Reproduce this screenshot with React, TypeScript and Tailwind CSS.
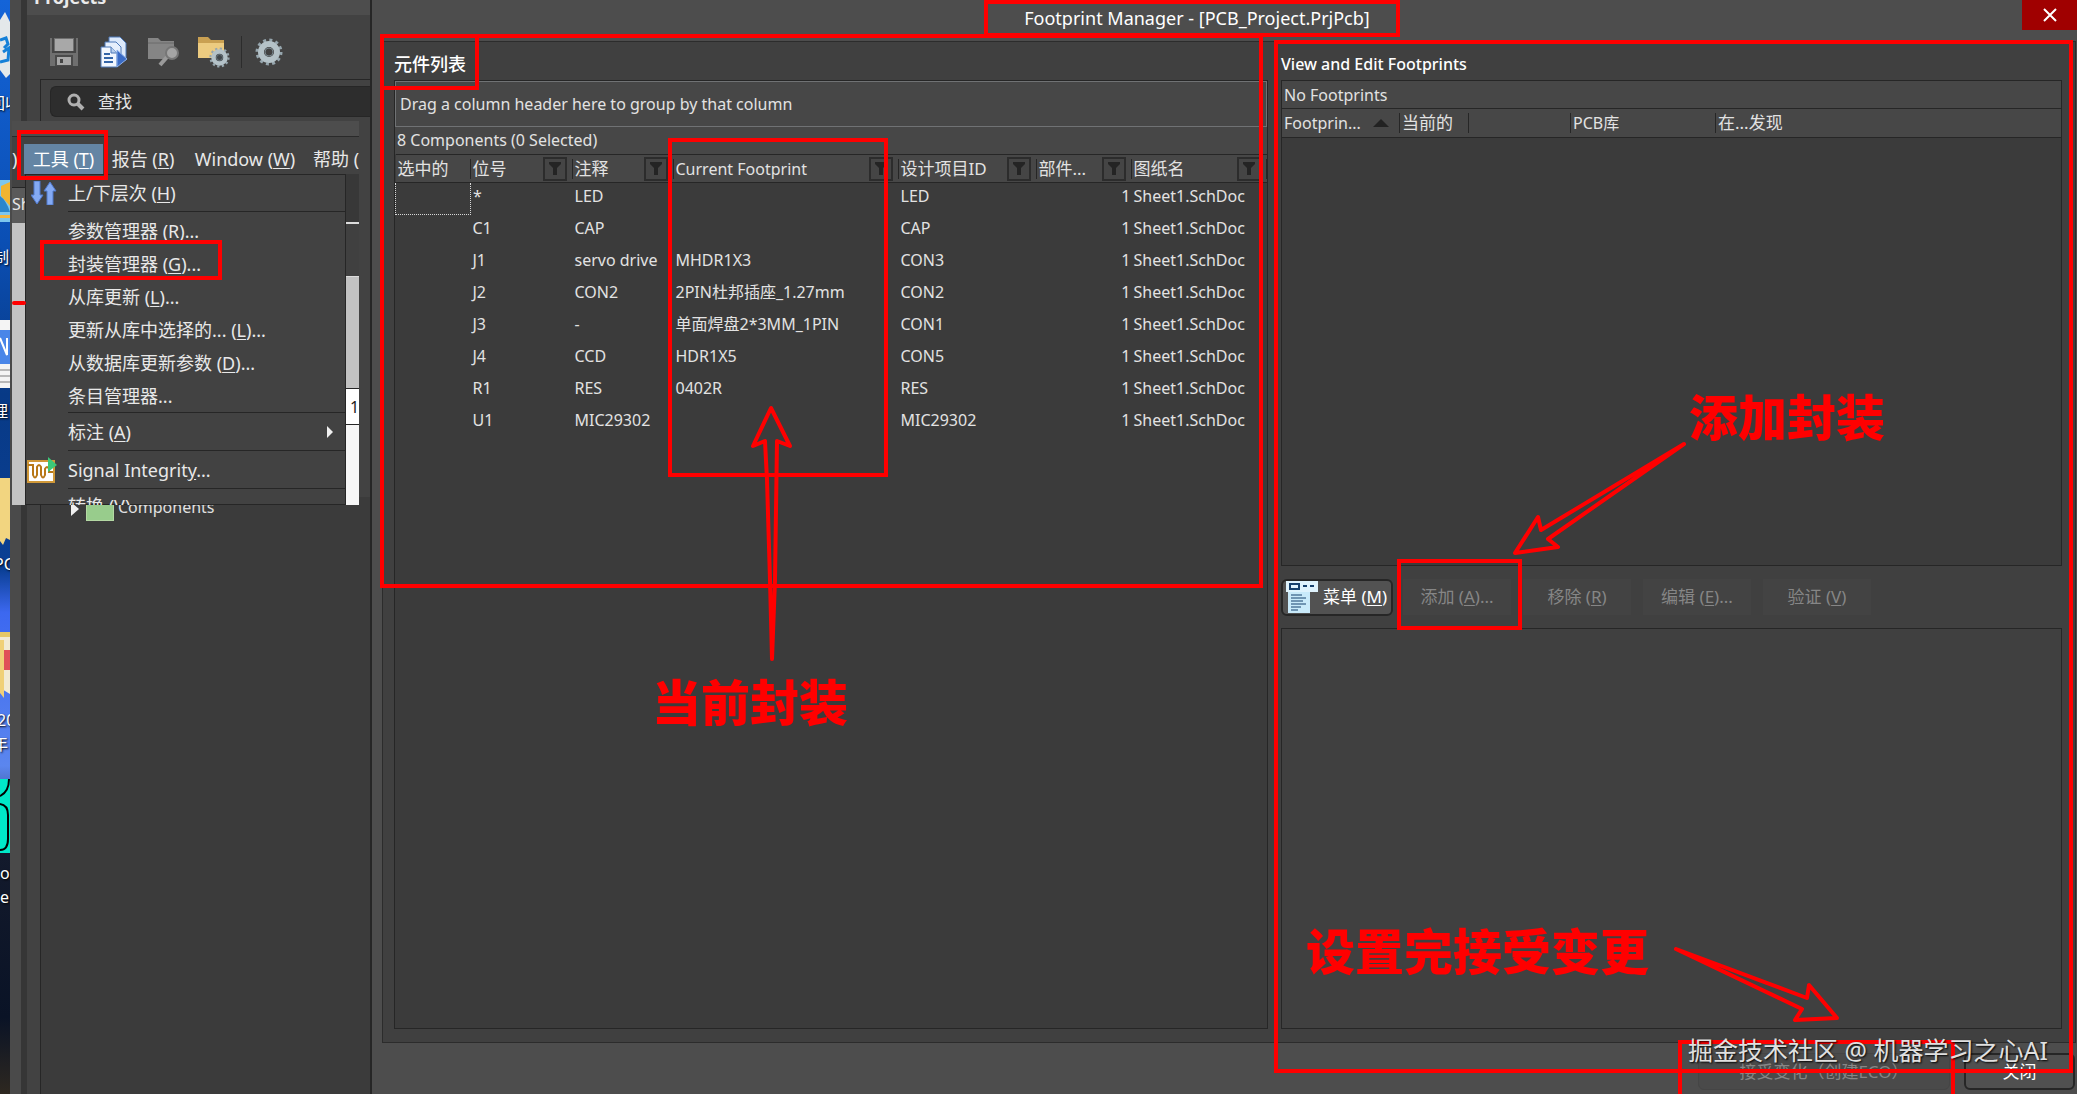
import type { ReactNode } from "react";

const components = [
  { designator: "*", comment: "LED", footprint: "", item: "LED" },
  { designator: "C1", comment: "CAP", footprint: "", item: "CAP" },
  { designator: "J1", comment: "servo drive", footprint: "MHDR1X3", item: "CON3" },
  { designator: "J2", comment: "CON2", footprint: "2PIN杜邦插座_1.27mm", item: "CON2" },
  { designator: "J3", comment: "-", footprint: "单面焊盘2*3MM_1PIN", item: "CON1" },
  { designator: "J4", comment: "CCD", footprint: "HDR1X5", item: "CON5" },
  { designator: "R1", comment: "RES", footprint: "0402R", item: "RES" },
  { designator: "U1", comment: "MIC29302", footprint: "", item: "MIC29302" },
];

const listColumns = [
  { title: "选中的", width: "w-[75px]", filter: false },
  { title: "位号", width: "w-[102px]", filter: true },
  { title: "注释", width: "w-[101px]", filter: true },
  { title: "Current Footprint", width: "w-[225px]", filter: true },
  { title: "设计项目ID", width: "w-[138px]", filter: true },
  { title: "部件...", width: "w-[95px]", filter: true },
  { title: "图纸名", width: "", filter: true },
];

const desktopLabels = [
  { text: "回收", className: "-left-[11px] top-[92px]" },
  { text: "制", className: "-left-[7px] top-[246px]" },
  { text: "理", className: "-left-[8px] top-[400px]" },
  { text: "PC", className: "-left-[6px] top-[553px]" },
  { text: "20", className: "-left-[3px] top-[709px]" },
  { text: "年", className: "-left-[8px] top-[733px]" },
  { text: "o", className: "left-0 top-[862px]" },
  { text: "e", className: "left-0 top-[886px]" },
];

// Letter shown in brackets after a caption, underlined as the access key
const Key = ({ children }: { children: ReactNode }) => (
  <span className="underline underline-offset-2">{children}</span>
);

const Desktop = () => (
  <aside className="relative w-[10px] shrink-0 overflow-hidden bg-[#0c1220]">
    <svg width="10" height="1094" className="absolute left-0 top-0">
      <defs>
        <linearGradient id="wall" x1="0" y1="0" x2="0" y2="1">
          <stop offset="0" stopColor="#1464d8" />
          <stop offset="0.22" stopColor="#0b4fb4" />
          <stop offset="0.36" stopColor="#083a86" />
          <stop offset="0.52" stopColor="#0a3f94" />
          <stop offset="0.56" stopColor="#3c68f0" />
          <stop offset="0.7" stopColor="#5b86ee" />
          <stop offset="0.78" stopColor="#131a2c" />
          <stop offset="0.93" stopColor="#0a1326" />
          <stop offset="1" stopColor="#2e2820" />
        </linearGradient>
      </defs>
      <rect width="10" height="1094" fill="url(#wall)" />
      <path d="M0 20 L5 12 L10 22 V74 L6 78 L0 70 Z" fill="#e4e8ea" />
      <path d="M0 40 L6 38 L8 44 L4 48 M3 52 L9 48 L8 60 L0 62" stroke="#1580d8" strokeWidth="3" fill="none" />
      <rect y="180" width="10" height="42" fill="#7cc6ee" />
      <path d="M1 186 L10 182 V206 L1 196 Z" fill="#f0b430" />
      <path d="M0 196 Q6 200 10 212 H0 Z" fill="#2a86cc" />
      <rect y="215" width="10" height="3" fill="#f2b640" />
      <rect y="320" width="10" height="68" fill="#f4f4f4" />
      <rect y="330" width="10" height="34" fill="#4a86e8" />
      <path d="M0 338 L7 355 V338" stroke="#fff" strokeWidth="2" fill="none" />
      <path d="M0 370 H10 M0 376 H10 M0 382 H10" stroke="#b8b8b8" strokeWidth="2" />
      <path d="M0 478 H10 V540 L6 538 L3 545 L0 541 Z" fill="#f2d580" />
      <path d="M0 632 H10 V694 L0 688 Z" fill="#f2ead4" />
      <rect y="632" width="10" height="5" fill="#e6c766" />
      <rect x="4" y="650" width="6" height="20" fill="#e05058" />
      <path d="M0 640 H4 V698 L0 693 Z" fill="#f0d078" />
      <rect y="779" width="10" height="74" fill="#00e8c8" />
      <path d="M0 796 Q9 792 9 779 M0 804 Q8 805 8 815 V839 Q8 850 0 850" stroke="#000" strokeWidth="2" fill="none" />
    </svg>
    {desktopLabels.map((label) => (
      <span
        key={label.text}
        className={`absolute whitespace-nowrap text-base leading-[22px] text-white [text-shadow:1px_1px_2px_#000] ${label.className}`}
      >
        {label.text}
      </span>
    ))}
  </aside>
);

const SaveIcon = () => (
  <svg width="28" height="28" viewBox="0 0 28 28">
    <path d="M0 0 H28 V28 H0 Z" fill="#6f6f6f" />
    <rect x="5" y="1" width="18" height="12" fill="#a8a8a8" />
    <path d="M3 0 V14 H25 V0" stroke="#454545" strokeWidth="2" fill="none" />
    <rect x="5" y="17" width="18" height="11" fill="#4a4a4a" />
    <rect x="7" y="19" width="14" height="8" fill="#a8a8a8" />
    <rect x="10" y="21" width="3" height="4" fill="#454545" />
  </svg>
);

const DocsIcon = () => (
  <svg width="28" height="32" viewBox="0 0 28 32">
    <path d="M9 1 H20 L26 7 V24 H9 Z" fill="#dce9fb" stroke="#4c78b8" />
    <path d="M5 6 H16 L21 11 V27 H5 Z" fill="#e6effc" stroke="#4c78b8" />
    <path d="M1 11 H11 L17 17 V31 H1 Z" fill="#f2f7fe" stroke="#4c78b8" />
    <path d="M11 11 V17 H17" fill="#b9d0ee" stroke="#4c78b8" />
    <path d="M4 18 H10 M4 22 H13 M4 26 H13" stroke="#3465a8" strokeWidth="2" />
    <path d="M17 14 L27 23 L17 31 Z" fill="#3b6cc6" stroke="#8fb2ea" />
  </svg>
);

const FolderSearchIcon = () => (
  <svg width="32" height="30" viewBox="0 0 32 30">
    <path d="M0 1 H10 L13 4 H26 V22 H0 Z" fill="#858585" />
    <path d="M0 6 H26" stroke="#6a6a6a" />
    <path d="M19 20 L12 28" stroke="#9a9a9a" strokeWidth="4" />
    <circle cx="24" cy="16" r="6" fill="#a4a4a4" stroke="#767676" strokeWidth="2" />
  </svg>
);

const Gear = ({ size, fill = "none" }: { size: number; fill?: string }) => (
  <svg width={size} height={size} viewBox="0 0 28 28">
    <circle cx="14" cy="14" r="12" fill="none" stroke="#96a6ae" strokeWidth="3" strokeDasharray="3 3.28" />
    <circle cx="14" cy="14" r="8" fill={fill} stroke="#b4c2c8" strokeWidth="6" />
    <circle cx="14" cy="14" r="4" fill={fill} stroke="#77868e" strokeWidth="1" />
  </svg>
);

const FolderGearIcon = () => (
  <span className="relative block h-[32px] w-[32px]">
    <svg width="26" height="24" viewBox="0 0 26 24">
      <path d="M0 1 H10 L13 4 H26 V22 H0 Z" fill="#c9a052" />
      <path d="M2 7 H26 V22 H0 V7 Z" fill="#eccb80" />
    </svg>
    <span className="absolute bottom-0 right-0">
      <Gear size={21} fill="#40464a" />
    </span>
  </span>
);

const FilterButton = ({ label }: { label: string }) => (
  <button
    aria-label={label}
    className="flex size-6 shrink-0 items-center justify-center border-2 border-[#2c2c2c] bg-[#454545]"
  >
    <svg width="12" height="13" viewBox="0 0 12 13">
      <path d="M0 0 H12 V2 L8 6 V13 H4 V6 L0 2 Z" fill="#242424" />
    </svg>
  </button>
);

const ProjectsPanel = () => (
  <section className="flex w-[361px] shrink-0 bg-[#4a4a4a]">
    <div className="w-[11px] shrink-0" />
    <div className="w-[6px] shrink-0 bg-[#363636]" />
    <div className="flex min-w-0 flex-1 flex-col border-r border-[#262626] bg-[#424242]">
      <h2 className="h-[15px] shrink-0 overflow-hidden bg-[#4d4d4d] pl-[7px] text-lg font-bold leading-6 text-[#eaeaea]">
        <span className="-mt-[15px] block">Projects</span>
      </h2>
      <div className="flex h-16 shrink-0 items-center pl-[23px] pt-[9px]">
        <button aria-label="Save"><SaveIcon /></button>
        <button aria-label="Documents" className="ml-[22px]"><DocsIcon /></button>
        <button aria-label="Find in folder" className="ml-5"><FolderSearchIcon /></button>
        <button aria-label="Folder options" className="ml-[18px]"><FolderGearIcon /></button>
        <span className="ml-[11px] h-8 w-px bg-[#2c2c2c]" />
        <button aria-label="Settings" className="ml-[13px]"><Gear size={28} /></button>
      </div>
      <div className="ml-[13px] flex-1 border-l border-t border-[#262626] bg-[#3b3b3b]">
        <div className="h-[45px] bg-[#424242] pl-[9px] pt-[6px]">
          <label className="flex h-[31px] items-center rounded-l-md border border-r-0 border-[#262626] bg-[#2d2d2d] pl-4">
            <svg width="18" height="18" viewBox="0 0 18 18" fill="none" stroke="#b0b0b0">
              <circle cx="7" cy="7" r="5" strokeWidth="3" />
              <path d="M11 11 L16 16" strokeWidth="4" />
            </svg>
            <input
              aria-label="查找"
              placeholder="查找"
              className="ml-[13px] w-40 bg-transparent text-[17px] leading-6 outline-none placeholder:text-[#e6e6e6]"
            />
          </label>
        </div>
        <div className="h-[372px] bg-[#424242]" />
        <div className="flex h-6 items-center pl-[30px] text-base text-[#e0e0e0]">
          <svg width="8" height="14" viewBox="0 0 8 14">
            <path d="M0 0 L8 7 L0 14 Z" fill="#f0f0f0" />
          </svg>
          <span className="ml-[7px] h-6 w-[28px] border border-[#b4d8a4] bg-[#98cc8c]" />
          <span className="-mt-1 ml-1">Components</span>
        </div>
      </div>
    </div>
  </section>
);

const MenuItem = ({ children }: { children: ReactNode }) => (
  <button className="flex h-[33px] w-full items-center whitespace-nowrap pl-[42px] text-left">{children}</button>
);

const Divider = () => <div className="ml-[42px] h-px bg-[#262626]" />;

const ToolsWindow = () => (
  <div className="absolute left-[12px] top-[121px] h-[384px] w-[347px] overflow-hidden bg-[#424242] text-lg text-[#e8e8e8]">
    <div className="h-4 border-b border-[#2a2a2a] bg-[#4d4d4d]" />
    <nav className="flex h-[37px] items-center whitespace-nowrap pt-[6px]">
      <span className="w-3 shrink-0">)</span>
      <button className="h-[30px] w-[79px] shrink-0 bg-[#6485a4] text-center text-white">工具 (<Key>T</Key>)</button>
      <button className="ml-[6px] w-[68px] shrink-0">报告 (<Key>R</Key>)</button>
      <button className="ml-[14px] w-[108px] shrink-0">Window (<Key>W</Key>)</button>
      <button className="ml-[14px]">帮助 (<Key>H</Key>)</button>
    </nav>
    <div className="flex h-[331px]">
      <div className="w-[13px] shrink-0 overflow-hidden bg-[#c4c4c4]">
        <div className="h-[14px] border-b border-[#262626] bg-[#424242]" />
        <div className="h-[35px] bg-[#5a5a5a] text-base leading-8">Sh</div>
      </div>
      <div className="relative w-[321px] shrink-0 border border-[#262626]">
        <svg width="26" height="24" viewBox="0 0 26 24" className="absolute left-[5px] top-[6px]">
          <path d="M3 0 H9 V14 H12 L6 23 L0 14 H3 Z" fill="#84aaf4" stroke="#4f78cc" />
          <path d="M16 24 H22 V10 H25 L19 1 L13 10 H16 Z" fill="#84aaf4" stroke="#4f78cc" />
        </svg>
        <button className="flex h-9 w-full items-center pl-[42px]">上/下层次 (<Key>H</Key>)</button>
        <Divider />
        <div className="pt-[2px]">
          <MenuItem>参数管理器 (<Key>R</Key>)...</MenuItem>
          <MenuItem>封装管理器 (<Key>G</Key>)...</MenuItem>
          <MenuItem>从库更新 (<Key>L</Key>)...</MenuItem>
          <MenuItem>更新从库中选择的... (<Key>L</Key>)...</MenuItem>
          <MenuItem>从数据库更新参数 (<Key>D</Key>)...</MenuItem>
          <MenuItem>条目管理器...</MenuItem>
        </div>
        <Divider />
        <button className="flex h-[37px] w-full items-center pl-[42px] pr-3">
          标注 (<Key>A</Key>)
          <svg width="6" height="12" viewBox="0 0 6 12" className="ml-auto">
            <path d="M0 0 L6 6 L0 12 Z" fill="#f0f0f0" />
          </svg>
        </button>
        <Divider />
        <button className="flex h-[37px] w-full items-center pl-px">
          <svg width="30" height="26" viewBox="0 0 30 26">
            <rect x="1" y="4" width="26" height="21" fill="#fff" stroke="#d09838" strokeWidth="2" />
            <path d="M1 8 H6 V18 Q8 23 10 18 V10 Q12 6 14 10 V18 Q16 23 18 18 V12 Q20 8 22 12 V15 H26" fill="none" stroke="#b87818" strokeWidth="2" />
            <path d="M21 0 L30 8 L21 15 Z" fill="#3cc878" />
          </svg>
          <span className="ml-[11px]">Signal Integrit<Key>y</Key>...</span>
        </button>
        <Divider />
        <MenuItem>转换 (<Key>V</Key>)</MenuItem>
      </div>
      <div className="flex-1 text-[#1c1c1c]">
        <div className="h-[50px] border-b-2 border-[#dcdcdc] bg-[#383838]" />
        <div className="h-[53px] border-b border-[#dcdcdc] bg-[#404040]" />
        <div className="h-[111px] bg-[#c2c2c2]" />
        <div className="h-[37px] border-y border-[#262626] bg-white pl-1 text-base leading-[36px]">1</div>
        <div className="h-20 bg-[#f6f6f6]" />
      </div>
    </div>
  </div>
);

const ComponentList = () => (
  <section className="flex min-w-0 flex-col">
    <h2 className="flex h-[38px] items-center pt-[5px] text-lg font-medium text-white">元件列表</h2>
    <div className="min-h-0 flex-1 border border-[#262626] bg-[#3b3b3b]">
      <div className="flex h-[46px] items-center border border-[#707274] bg-[#474747] px-1">
        Drag a column header here to group by that column
      </div>
      <div className="h-[27px] bg-[#474747] px-[2px] leading-[27px]">8 Components (0 Selected)</div>
      <table className="w-full table-fixed border-collapse">
        <thead>
          <tr className="h-[28px] border-y border-[#262626] bg-[#474747]">
            {listColumns.map((column) => (
              <th key={column.title} className={`p-0 text-left font-normal ${column.width}`}>
                <div className="flex h-[26px] items-center justify-between pl-[2px]">
                  <span className="whitespace-nowrap text-[17px] leading-5">
                    {column.title === "Current Footprint" ? <span className="text-base">{column.title}</span> : column.title}
                  </span>
                  <span className="flex items-center gap-[5px]">
                    {column.filter && <FilterButton label={`筛选 ${column.title}`} />}
                    <span className="h-5 w-px bg-[#262626]" />
                  </span>
                </div>
              </th>
            ))}
          </tr>
        </thead>
        <tbody className="text-base leading-[26px]">
          {components.map((row, i) => (
            <tr key={row.designator} className="h-8 align-top">
              <td className={i === 0 ? "border border-dotted border-[#d8d8d8] p-0" : "p-0"} />
              <td className="p-0 pl-[2px]">{row.designator}</td>
              <td className="whitespace-nowrap p-0 pl-[2px]">{row.comment}</td>
              <td className="whitespace-nowrap p-0 pl-[2px]">{row.footprint}</td>
              <td className="p-0 pl-[2px]">{row.item}</td>
              <td className="p-0 pr-px text-right">1</td>
              <td className="whitespace-nowrap p-0 pl-[2px]">Sheet1.SchDoc</td>
            </tr>
          ))}
        </tbody>
      </table>
    </div>
  </section>
);

const DisabledButton = ({ children }: { children: ReactNode }) => (
  <button disabled className="h-9 w-[108px] bg-[#434343] text-[17px] text-[#868686]">
    {children}
  </button>
);

const FootprintEditor = () => (
  <section className="flex min-w-0 flex-col">
    <h2 className="flex h-[38px] items-center pt-[5px] text-base font-medium text-white">View and Edit Footprints</h2>
    <div className="h-[486px] shrink-0 border border-[#262626] bg-[#3b3b3b]">
      <div className="h-[27px] bg-[#474747] px-[2px] leading-[28px]">No Footprints</div>
      <table className="w-full table-fixed border-collapse">
        <thead>
          <tr className="h-[29px] border-y border-[#262626] bg-[#474747] text-left text-base">
            <th className="w-[118px] p-0 font-normal">
              <div className="flex h-5 items-center justify-between border-r border-[#262626] pl-[2px] pr-[10px]">
                Footprin...
                <svg width="16" height="8" viewBox="0 0 16 8">
                  <path d="M8 0 L16 8 H0 Z" fill="#222" />
                </svg>
              </div>
            </th>
            <th className="w-[69px] p-0 font-normal">
              <div className="h-5 border-r border-[#262626] pl-[2px] text-[17px] leading-5">当前的</div>
            </th>
            <th className="w-[102px] p-0 font-normal">
              <div className="h-5 border-r border-[#262626]" />
            </th>
            <th className="w-[145px] p-0 font-normal">
              <div className="h-5 border-r border-[#262626] pl-[2px] leading-5">PCB库</div>
            </th>
            <th className="p-0 pl-[2px] text-[17px] font-normal leading-5">在...发现</th>
          </tr>
        </thead>
      </table>
    </div>
    <div className="flex h-[62px] shrink-0 items-center">
      <button className="flex h-[37px] w-[112px] items-center whitespace-nowrap rounded-md border-2 border-[#262626] bg-[#525252] pl-[3px] text-[17px] text-white">
        <svg width="32" height="32" viewBox="0 0 32 32" className="shrink-0">
          <rect width="32" height="11" fill="#dff3fd" />
          <rect x="2" y="11" width="22" height="21" fill="#c9eafa" />
          <path d="M4 3 H13 V8 H4 Z M17 5 H21 M24 5 H28" stroke="#16406c" strokeWidth="2" fill="none" />
          <path d="M5 14 H16 M5 17 H20 M5 20 H17 M5 23 H20 M5 26 H15 M5 29 H12" stroke="#16406c" />
        </svg>
        <span className="ml-[5px]">菜单 (<Key>M</Key>)</span>
      </button>
      <div className="ml-[10px] flex gap-3">
        <DisabledButton>添加 (<Key>A</Key>)...</DisabledButton>
        <DisabledButton>移除 (<Key>R</Key>)</DisabledButton>
        <DisabledButton>编辑 (<Key>E</Key>)...</DisabledButton>
        <DisabledButton>验证 (<Key>V</Key>)</DisabledButton>
      </div>
    </div>
    <div className="min-h-0 flex-1 border border-[#262626] bg-[#404040]" />
  </section>
);

const FootprintManager = () => (
  <main className="flex min-w-0 flex-1 flex-col border-l border-[#262626] bg-[#4d4d4d] text-base text-[#e2e2e2]">
    <header className="flex h-[41px] shrink-0 items-start">
      <h1 className="flex-1 text-center text-lg leading-9 text-white">Footprint Manager - [PCB_Project.PrjPcb]</h1>
      <button aria-label="Close" className="flex h-[30px] w-[55px] items-center justify-center bg-[#a00000]">
        <svg width="14" height="14" viewBox="0 0 14 14">
          <path d="M1 1 L13 13 M13 1 L1 13" stroke="#fff" strokeWidth="2" />
        </svg>
      </button>
    </header>
    <div className="ml-[10px] mr-px grid min-h-0 flex-1 grid-cols-[874fr_781fr] gap-[13px] border border-[#2c2c2c] bg-[#404040] pb-[13px] pl-[11px] pr-[13px]">
      <ComponentList />
      <FootprintEditor />
    </div>
    <footer className="flex h-[51px] shrink-0 items-start justify-end gap-[14px] pr-[2px] pt-[10px] text-[17px]">
      <button disabled className="h-[37px] w-[252px] rounded-md border border-[#454545] bg-[#4a4a4a] text-[#868686]">
        接受变化（创建ECO）
      </button>
      <button className="h-[37px] w-[111px] rounded-md border-2 border-[#262626] bg-[#505050] text-white">关闭</button>
    </footer>
  </main>
);

const Box = ({ className }: { className: string }) => (
  <div className={`absolute border-4 border-[#ff0000] ${className}`} />
);

const Note = ({ className, children }: { className: string; children: ReactNode }) => (
  <p className={`absolute whitespace-nowrap text-[49px] font-black leading-[60px] text-[#ff0000] ${className}`}>{children}</p>
);

const Annotations = () => (
  <div className="pointer-events-none absolute inset-0 overflow-hidden">
    <Box className="left-[984px] top-0 h-[37px] w-[416px]" />
    <Box className="left-[380px] top-[34px] h-[554px] w-[883px]" />
    <Box className="left-[380px] top-[34px] h-[56px] w-[99px]" />
    <Box className="left-[668px] top-[138px] h-[339px] w-[220px]" />
    <Box className="left-[1274px] top-[40px] h-[1033px] w-[799px]" />
    <Box className="left-[1397px] top-[559px] h-[71px] w-[125px]" />
    <Box className="left-[1678px] top-[1040px] h-[80px] w-[277px]" />
    <Box className="left-[17px] top-[130px] h-[50px] w-[91px]" />
    <Box className="left-[40px] top-[240px] h-[40px] w-[182px]" />
    <div className="absolute left-[12px] top-[301px] h-1 w-[14px] rounded-full bg-[#ff0000]" />
    <svg width="2077" height="1094" className="absolute left-0 top-0" fill="none" stroke="#ff0000" strokeWidth="4" strokeLinejoin="round">
      <path d="M771 408 L753 446 L765 441 L767 480 L770 580 L772 659 L775 580 L777 441 L790 446 Z" />
      <path d="M1515 553 L1538 517 L1541 530 L1684 444 L1548 539 L1558 547 Z" />
      <path d="M1837 1018 L1809 985 L1807 998 L1676 949 L1802 1009 L1795 1020 Z" />
    </svg>
    <Note className="left-[652px] top-[672px]">当前封装</Note>
    <Note className="left-[1689px] top-[387px]">添加封装</Note>
    <Note className="left-[1306px] top-[921px]">设置完接受变更</Note>
    <p className="absolute left-[1688px] top-[1033px] whitespace-nowrap text-[25px] leading-[34px] text-[#e0e0e0] [text-shadow:1px_1px_2px_#000]">
      掘金技术社区 @ 机器学习之心AI
    </p>
  </div>
);

export default function App() {
  return (
    <div className="relative flex h-screen min-h-[1000px] overflow-hidden bg-[#4d4d4d] font-['Noto_Sans','Noto_Sans_CJK_SC',sans-serif]">
      <Desktop />
      <ProjectsPanel />
      <FootprintManager />
      <ToolsWindow />
      <Annotations />
    </div>
  );
}
